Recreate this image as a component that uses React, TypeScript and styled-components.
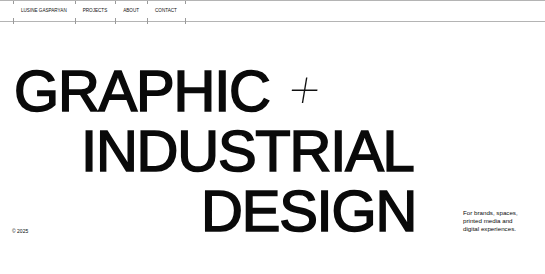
import styled, { createGlobalStyle } from 'styled-components'

const GlobalStyle = createGlobalStyle`
    html, body {
        margin: 0;
        padding: 0;
        background: #fff;
    }
    body {
        font-family: 'Liberation Sans', Arial, sans-serif;
        color: #0a0a0a;
    }
`

const Page = styled.div`
    width: 545px;
    height: 274px;
    overflow: hidden;
`

const NavBar = styled.nav`
    display: flex;
    height: 20px;
    border-top: 1px solid #b4b4b4;
    border-bottom: 1px solid #b4b4b4;
    padding-left: 13px;
`

const Tick = styled.span`
    position: relative;
    width: 0;
    &::before,
    &::after {
        content: '';
        position: absolute;
        left: 0;
        width: 1px;
        background: #9a9a9a;
    }
    &::before {
        top: 0;
        height: 3px;
    }
    &::after {
        top: 17px;
        height: 6px;
    }
`

const NavItem = styled.a`
    display: flex;
    align-items: center;
    padding: 0 8px;
    font-size: 4.6px;
    line-height: 1;
    text-transform: uppercase;
    color: #111;
    text-decoration: none;
    white-space: nowrap;
`

const Hero = styled.section`
    margin-top: 39px;
    padding-left: 12px;
`

const Line = styled.div<{ $indent: number }>`
    display: flex;
    align-items: flex-end;
    height: 60px;
    padding-left: ${p => p.$indent}px;
`

const Big = styled.span`
    font-size: 58px;
    line-height: 60px;
    font-weight: 400;
    -webkit-text-stroke: 1.6px #0a0a0a;
    letter-spacing: -0.021em;
    white-space: nowrap;
`

const Plus = styled.span`
    font-family: Inter, sans-serif;
    font-weight: 100;
    font-style: italic;
    font-size: 62px;
    line-height: 60px;
    margin-left: 15px;
    transform: translateY(-5px);
    color: #111;
`

const Copyright = styled.span`
    width: 189px;
    flex-shrink: 0;
    font-size: 5px;
    line-height: 6px;
    margin-bottom: 7px;
`

const Tagline = styled.p`
    margin: 0 0 8px auto;
    width: 82px;
    font-size: 6.2px;
    line-height: 8px;
`

const App = () => {
    const links = ['Lusine Gasparyan', 'Projects', 'About', 'Contact']
    return (
        <Page>
            <GlobalStyle />
            <NavBar>
                {links.map(l => (
                    <>
                        <Tick key={l + '-t'} />
                        <NavItem key={l} href="#">{l}</NavItem>
                    </>
                ))}
                <Tick />
            </NavBar>
            <Hero>
                <Line $indent={2}>
                    <Big>GRAPHIC</Big>
                    <Plus>+</Plus>
                </Line>
                <Line $indent={69}>
                    <Big>INDUSTRIAL</Big>
                </Line>
                <Line $indent={0}>
                    <Copyright>© 2025</Copyright>
                    <Big>DESIGN</Big>
                    <Tagline>
                        For brands, spaces,
                        <br />
                        printed media and
                        <br />
                        digital experiences.
                    </Tagline>
                </Line>
            </Hero>
        </Page>
    )
}

export default App
